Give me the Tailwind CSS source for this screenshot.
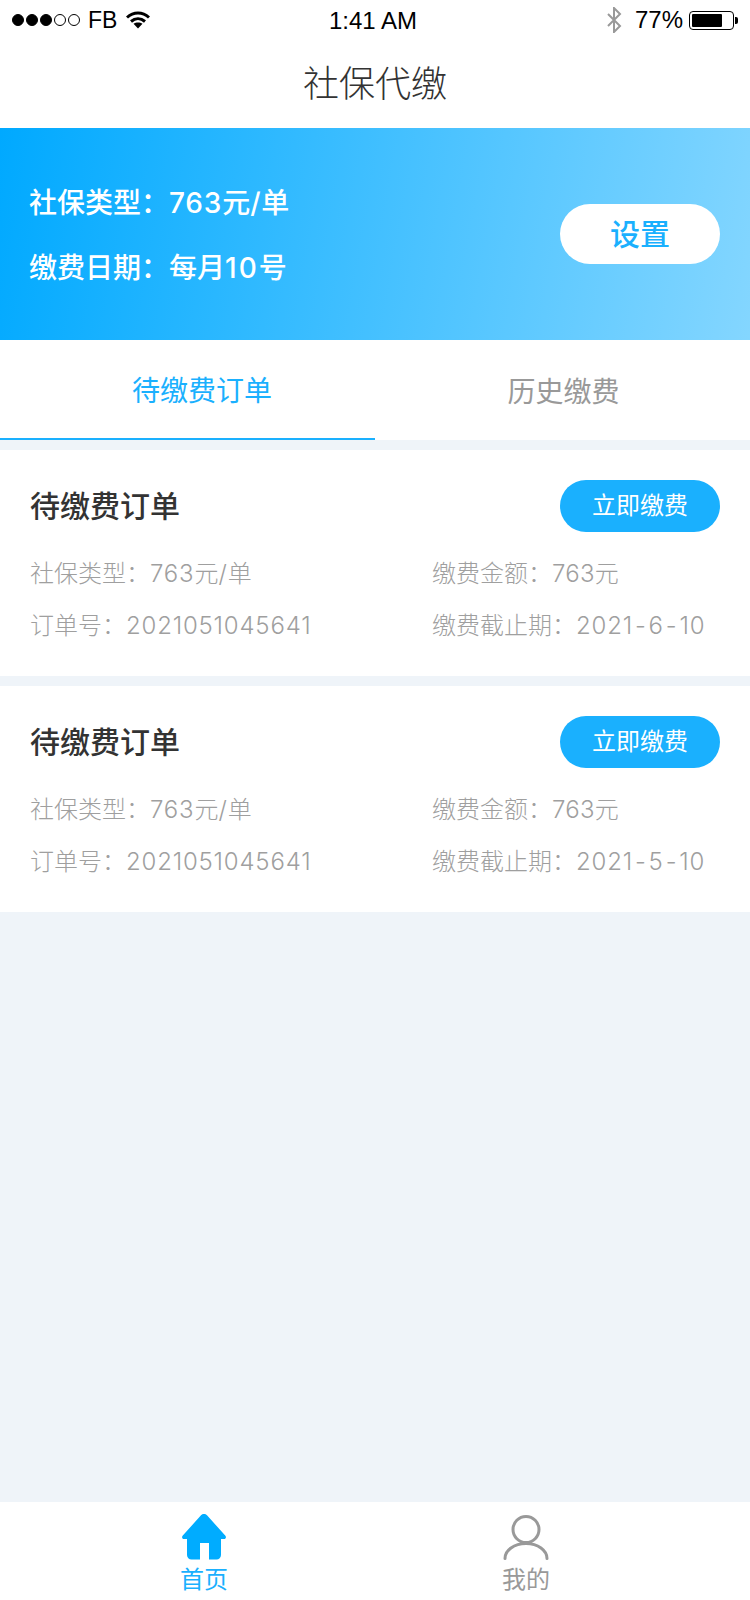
<!DOCTYPE html>
<html lang="zh-CN">
<head>
    <meta charset="UTF-8">
    <meta name="viewport" content="width=device-width, initial-scale=1.0">
    <title>社保代缴</title>
    <script src="https://cdn.jsdelivr.net/npm/@tailwindcss/browser@4"></script>
</head>
<body class="font-['Liberation_Sans','Noto_Sans_CJK_SC',sans-serif] antialiased">
<div class="w-[750px] h-[1600px] flex flex-col bg-[#eff4f9] overflow-hidden">

    <!-- Status bar -->
    <div class="h-10 bg-white flex items-center justify-between pl-3 pr-[12px] text-black text-[24px] relative">
        <div class="flex items-center">
            <div class="flex items-center gap-[2px]">
                <span class="w-[12px] h-[12px] rounded-full bg-black border border-black"></span>
                <span class="w-[12px] h-[12px] rounded-full bg-black border border-black"></span>
                <span class="w-[12px] h-[12px] rounded-full bg-black border border-black"></span>
                <span class="w-[12px] h-[12px] rounded-full border border-black"></span>
                <span class="w-[12px] h-[12px] rounded-full border border-black"></span>
            </div>
            <span class="ml-[8px] leading-none text-[23px]">FB</span>
            <svg class="ml-[9px]" width="24" height="18" viewBox="0 0 24 18" fill="none" stroke="#000" stroke-width="3">
                <path d="M1 6.500C7.500 .6 16.500 .6 23 6.500"/>
                <path d="M5 10.500c4.200-3.600 9.800-3.600 14 0"/>
                <path d="M12 17.500l-4.500-4.700c2.600-1.800 6.400-1.800 9 0z" fill="#000" stroke="none"/>
            </svg>
        </div>
        <span class="absolute left-[329px] top-[9px] leading-none font-medium">1:41 AM</span>
        <div class="flex items-center">
            <svg width="16" height="26" viewBox="0 0 16 26" fill="none" stroke="#999" stroke-width="2">
                <path d="M2 7l12 12-6 6V1l6 6L2 19"/>
            </svg>
            <span class="ml-[13px] leading-none">77%</span>
            <div class="ml-[6px] w-[45px] h-[19px] rounded-[4px] border border-black p-[2px]">
                <div class="w-[30px] h-full bg-black rounded-[1px]"></div>
            </div>
            <div class="ml-[1px] w-[3px] h-[7px] bg-black rounded-r-[2px]"></div>
        </div>
    </div>

    <!-- Nav title -->
    <div class="h-[88px] pt-[2px] bg-white flex items-center justify-center text-[36px] font-light text-[#333333]">社保代缴</div>

    <!-- Banner -->
    <div class="h-[212px] bg-linear-[100deg] from-[#00a9ff] to-[#84d6ff] flex items-center justify-between pl-[29px] pr-[30px] text-white">
        <div class="flex flex-col gap-[28px] pt-[3px] text-[28px] leading-[37px] font-medium font-['Inter','Noto_Sans_CJK_SC',sans-serif]">
            <div>社保类型：<span class="tracking-[0.8px]">763</span>元<span class="tracking-[0.8px]">/</span>单</div>
            <div>缴费日期：每月<span class="tracking-[2px]">10</span>号</div>
        </div>
        <div class="w-[160px] h-[60px] rounded-full bg-white flex items-center justify-center text-[30px] font-medium text-[#1ab0fe]">设置</div>
    </div>

    <!-- Tabs -->
    <div class="h-[100px] bg-white flex text-[28px]">
        <div class="w-1/2 flex items-center justify-center pt-[6px] pl-[29px] text-[#1ab0fe] border-b-2 border-[#1ab0fe]">待缴费订单</div>
        <div class="w-1/2 flex items-center justify-center pt-[6px] pl-[2px] text-[#999999]">历史缴费</div>
    </div>

    <!-- Orders -->
    <div class="mt-[10px] flex flex-col gap-[10px]">
        <div class="h-[226px] bg-white pl-[30px] pr-[30px] pt-[30px]">
            <div class="flex items-center justify-between h-[52px]">
                <div class="text-[30px] font-medium text-[#333333]">待缴费订单</div>
                <div class="w-[160px] h-[52px] rounded-full bg-[#1ab0fe] flex items-center justify-center text-white text-[24px]">立即缴费</div>
            </div>
            <div class="mt-[24px] grid grid-cols-[402px_1fr] gap-y-[16px] text-[24px] leading-[36px] font-light text-[#9f9f9f] font-['Inter','Noto_Sans_CJK_SC',sans-serif]">
                <div>社保类型：<span class="tracking-[0.8px]">763</span>元<span class="tracking-[1px]">/</span>单</div>
                <div>缴费金额：<span class="tracking-[0.2px]">763</span>元</div>
                <div>订单号：<span class="tracking-[0.8px]">2021051045641</span></div>
                <div>缴费截止期：<span class="tracking-[0.8px]">2021<span class="mx-[2px]">-</span>6<span class="mx-[2px]">-</span>10</span></div>
            </div>
        </div>
        <div class="h-[226px] bg-white pl-[30px] pr-[30px] pt-[30px]">
            <div class="flex items-center justify-between h-[52px]">
                <div class="text-[30px] font-medium text-[#333333]">待缴费订单</div>
                <div class="w-[160px] h-[52px] rounded-full bg-[#1ab0fe] flex items-center justify-center text-white text-[24px]">立即缴费</div>
            </div>
            <div class="mt-[24px] grid grid-cols-[402px_1fr] gap-y-[16px] text-[24px] leading-[36px] font-light text-[#9f9f9f] font-['Inter','Noto_Sans_CJK_SC',sans-serif]">
                <div>社保类型：<span class="tracking-[0.8px]">763</span>元<span class="tracking-[1px]">/</span>单</div>
                <div>缴费金额：<span class="tracking-[0.2px]">763</span>元</div>
                <div>订单号：<span class="tracking-[0.8px]">2021051045641</span></div>
                <div>缴费截止期：<span class="tracking-[0.8px]">2021<span class="mx-[2px]">-</span>5<span class="mx-[2px]">-</span>10</span></div>
            </div>
        </div>
    </div>

    <!-- Bottom tab bar -->
    <div class="mt-auto h-[98px] bg-white flex">
        <div class="w-[408px] flex flex-col items-center pt-[12px]">
            <svg width="44" height="46" viewBox="0 0 44 46" fill="#00acff">
                <path d="M22 0c-1.200 0-2.200.5-3 1.300L.8 21.500C-.6 23 .2 25 2 25h3v16c0 2.500 2 4.500 4.500 4.500H18V29h9v16.500h7.500c2.500 0 4.500-2 4.500-4.500V25h3c1.800 0 2.600-2 1.200-3.500L25 1.300C24.200.5 23.200 0 22 0z"/>
            </svg>
            <span class="mt-[5px] text-[24px] leading-[30px] text-[#1ab0fe]">首页</span>
        </div>
        <div class="w-[236px] flex flex-col items-center pt-[12px]">
            <svg width="46" height="46" viewBox="0 0 46 46" fill="none" stroke="#999" stroke-width="3">
                <circle cx="23" cy="15.500" r="13"/>
                <path d="M2 44.500c0-8 9-15 21-15s21 7 21 15" stroke-linecap="round"/>
            </svg>
            <span class="mt-[5px] text-[24px] leading-[30px] text-[#999999]">我的</span>
        </div>
    </div>
</div>
</body>
</html>
